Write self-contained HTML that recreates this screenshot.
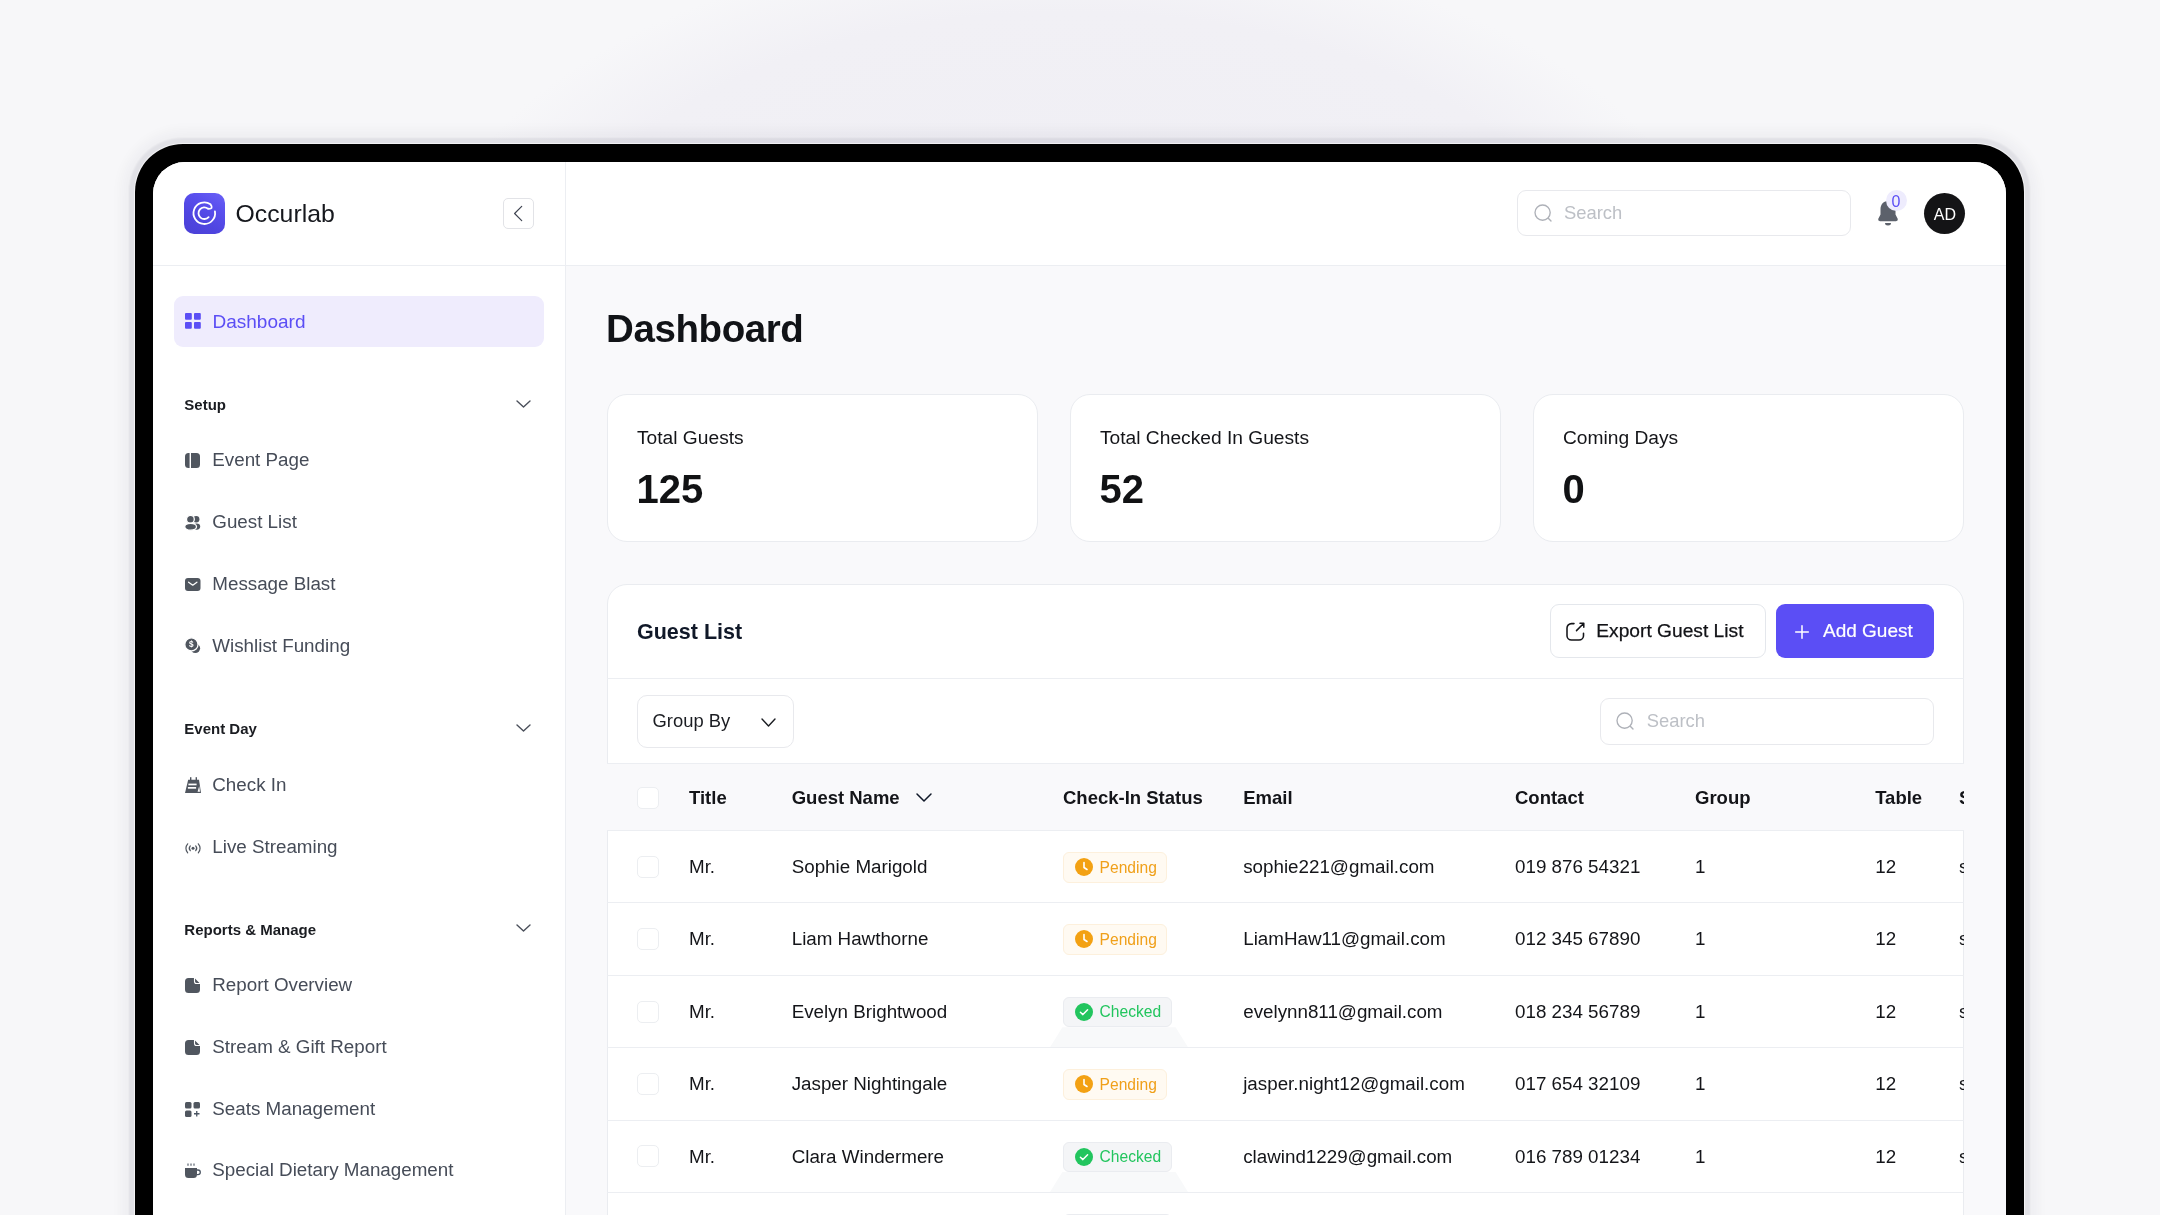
<!DOCTYPE html>
<html><head><meta charset="utf-8">
<style>
*{box-sizing:border-box;margin:0;padding:0}
html,body{width:2160px;height:1215px;overflow:hidden}
body{font-family:"Liberation Sans",sans-serif;position:relative;color:#101828;
 background:radial-gradient(ellipse 650px 360px at 1070px 300px,#efeef4 0%,#f1f0f5 80%,#f7f7f9 100%);}
.a{position:absolute;white-space:nowrap;line-height:1}
svg{position:absolute;overflow:visible}
.box{position:absolute}
#device{position:absolute;left:135px;top:144px;width:1889px;height:1300px;background:#000;border-radius:48px;
 box-shadow:0 0 0 1px rgba(255,255,255,.6),0 0 2px 6px rgba(20,20,50,.06),0 0 12px 14px rgba(20,20,50,.035)}
#screen{position:absolute;left:153px;top:162px;width:1853px;height:1300px;background:#fff;border-radius:32px;overflow:hidden}
#in{position:absolute;left:-153px;top:-162px;width:2160px;height:1500px;will-change:transform}
.nav{color:#464c58}
.sec{font-weight:700;color:#1a1c21}
.lbl{color:#141519}
.num{font-weight:700;color:#111214}
.th{font-weight:700;color:#141519}
.td{color:#141519}
</style></head><body>
<div id="device"></div>
<div id="screen"><div id="in">
<div class="box" style="left:153px;top:162px;width:413px;height:1400px;background:#fff;border-right:1px solid #eceef2"></div>
<div class="box" style="left:153px;top:265px;width:412px;height:1px;background:#eceef2"></div>
<div class="box" style="left:184px;top:193px;width:41px;height:41px;border-radius:10px;background:linear-gradient(210deg,#6b62f6 0%,#5a50ee 30%,#4f45e0 65%,#4a40d6 100%)"></div>
<svg style="left:184px;top:193px" width="41" height="41" viewBox="0 0 41 41">
 <path d="M30.94 18.32 A10.8 10.8 0 1 1 26.49 11.35 Q30.10 16.20 24.03 15.76 A5.8 5.8 0 1 0 24.61 24.08" fill="none" stroke="#fff" stroke-width="1.8" stroke-linecap="round" stroke-linejoin="round"/>
</svg>
<div class="a " style="left:235.50px;top:202.00px;font-size:24.8px;color:#16181d">Occurlab</div>
<div class="box" style="left:503px;top:198px;width:31px;height:31px;border:1px solid #e2e3e7;border-radius:5px;background:#fff"></div>
<svg style="left:503px;top:198px" width="31" height="31" viewBox="0 0 31 31"><path d="M18.7 8.4 L11.6 15.5 L18.7 22.6" fill="none" stroke="#3f4451" stroke-width="1.2" stroke-linecap="round" stroke-linejoin="round"/></svg>
<div class="box" style="left:174px;top:296px;width:370px;height:51px;background:#efecfd;border-radius:9px"></div>
<svg style="left:185px;top:313px" width="16" height="16" viewBox="0 0 16 16" fill="#5b4ef5"><rect x="0" y="0" width="6.8" height="6.8" rx="1"/><rect x="9" y="0" width="6.8" height="6.8" rx="1"/><rect x="0" y="9" width="6.8" height="6.8" rx="1"/><rect x="9" y="9" width="6.8" height="6.8" rx="1"/></svg>
<div class="a " style="left:212.50px;top:312.41px;font-size:19px;color:#5b4ef5">Dashboard</div>
<div class="a sec" style="left:184.30px;top:397.10px;font-size:15px;">Setup</div>
<svg style="left:515.5px;top:399.8px" width="15" height="8" viewBox="0 0 15 8"><path d="M1 1 L7.5 7 L14 1" fill="none" stroke="#4b505b" stroke-width="1.4" stroke-linecap="round" stroke-linejoin="round"/></svg>
<svg style="left:185.2px;top:453.2px" width="15" height="15" viewBox="0 0 15 15" fill="#50565f"><rect x="0" y="0" width="15" height="15" rx="3.5"/><rect x="4.6" y="-1" width="1.4" height="17" fill="#fff"/></svg>
<div class="a nav" style="left:212.30px;top:451.28px;font-size:18.8px;">Event Page</div>
<svg style="left:185.2px;top:514.95px" width="15" height="15" viewBox="0 0 15 15" fill="#50565f"><circle cx="11.2" cy="4.3" r="3.2"/><ellipse cx="11.6" cy="11.6" rx="3.6" ry="3.1"/><circle cx="5.4" cy="4.2" r="3.9" stroke="#fff" stroke-width="1.3"/><ellipse cx="5.6" cy="11.8" rx="5.9" ry="3.4" stroke="#fff" stroke-width="1.3"/></svg>
<div class="a nav" style="left:212.30px;top:513.03px;font-size:18.8px;">Guest List</div>
<svg style="left:185.2px;top:576.7px" width="15" height="15" viewBox="0 0 15 15" fill="#50565f"><rect x="0" y="1" width="15.5" height="13" rx="3"/><path d="M3.6 5.2 L7.75 8.2 L11.9 5.2" fill="none" stroke="#fff" stroke-width="1.3" stroke-linecap="round" stroke-linejoin="round"/></svg>
<div class="a nav" style="left:212.30px;top:574.78px;font-size:18.8px;">Message Blast</div>
<svg style="left:185.2px;top:638.45px" width="15" height="15" viewBox="0 0 15 15" fill="#50565f"><circle cx="10.3" cy="10.3" r="4.8"/><circle cx="6.4" cy="6.4" r="6.6" stroke="#fff" stroke-width="1.3"/><text x="6.4" y="9.3" font-size="8.2" font-weight="700" fill="#fff" text-anchor="middle" font-family="Liberation Sans">$</text></svg>
<div class="a nav" style="left:212.30px;top:636.53px;font-size:18.8px;">Wishlist Funding</div>
<div class="a sec" style="left:184.30px;top:721.10px;font-size:15px;">Event Day</div>
<svg style="left:515.5px;top:723.8px" width="15" height="8" viewBox="0 0 15 8"><path d="M1 1 L7.5 7 L14 1" fill="none" stroke="#4b505b" stroke-width="1.4" stroke-linecap="round" stroke-linejoin="round"/></svg>
<svg style="left:185.2px;top:778.1px" width="15" height="15" viewBox="0 0 15 15" fill="#50565f"><path d="M3.2 1.8 H14 L16 15 H0 Z"/><rect x="5" y="-0.8" width="1.4" height="3.6"/><rect x="10.6" y="-0.8" width="1.4" height="3.6" /><rect x="3.4" y="5.6" width="8.2" height="1.7" fill="#fff"/><rect x="2.9" y="9" width="8.2" height="1.7" fill="#fff"/><path d="M14.2 8 L15 13.8 H12.6Z" fill="#fff"/></svg>
<div class="a nav" style="left:212.30px;top:776.18px;font-size:18.8px;">Check In</div>
<svg style="left:185.2px;top:839.6px" width="15" height="15" viewBox="0 0 15 15" fill="#50565f"><circle cx="8" cy="8.3" r="1.5"/><path d="M5.3 5.9 A3.6 3.6 0 0 0 5.3 10.7 M10.7 5.9 A3.6 3.6 0 0 1 10.7 10.7 M2.7 3.8 A6.6 6.6 0 0 0 2.7 12.8 M13.3 3.8 A6.6 6.6 0 0 1 13.3 12.8" fill="none" stroke="#50565f" stroke-width="1.2" stroke-linecap="round"/></svg>
<div class="a nav" style="left:212.30px;top:837.68px;font-size:18.8px;">Live Streaming</div>
<div class="a sec" style="left:184.30px;top:921.60px;font-size:15px;">Reports &amp; Manage</div>
<svg style="left:515.5px;top:924.3px" width="15" height="8" viewBox="0 0 15 8"><path d="M1 1 L7.5 7 L14 1" fill="none" stroke="#4b505b" stroke-width="1.4" stroke-linecap="round" stroke-linejoin="round"/></svg>
<svg style="left:185.2px;top:978.0px" width="15" height="15" viewBox="0 0 15 15" fill="#50565f"><path d="M3.5 0 H9.5 L15 5.5 V11.5 A3.5 3.5 0 0 1 11.5 15 H3.5 A3.5 3.5 0 0 1 0 11.5 V3.5 A3.5 3.5 0 0 1 3.5 0Z"/><path d="M9.5 0 V3.5 A2 2 0 0 0 11.5 5.5 H15" fill="none" stroke="#fff" stroke-width="1.1"/></svg>
<div class="a nav" style="left:212.30px;top:976.08px;font-size:18.8px;">Report Overview</div>
<svg style="left:185.2px;top:1039.8px" width="15" height="15" viewBox="0 0 15 15" fill="#50565f"><path d="M3.5 0 H9.5 L15 5.5 V11.5 A3.5 3.5 0 0 1 11.5 15 H3.5 A3.5 3.5 0 0 1 0 11.5 V3.5 A3.5 3.5 0 0 1 3.5 0Z"/><path d="M9.5 0 V3.5 A2 2 0 0 0 11.5 5.5 H15" fill="none" stroke="#fff" stroke-width="1.1"/></svg>
<div class="a nav" style="left:212.30px;top:1037.88px;font-size:18.8px;">Stream &amp; Gift Report</div>
<svg style="left:185.2px;top:1101.55px" width="15" height="15" viewBox="0 0 15 15" fill="#50565f"><rect x="0" y="0" width="6.5" height="6.5" rx="1.5"/><rect x="8.5" y="0" width="6.5" height="6.5" rx="1.5"/><rect x="0" y="8.5" width="6.5" height="6.5" rx="1.5"/><path d="M11.75 9 V14.5 M9 11.75 H14.5" stroke="#4b5563" stroke-width="1.3"/></svg>
<div class="a nav" style="left:212.30px;top:1099.63px;font-size:18.8px;">Seats Management</div>
<svg style="left:185.2px;top:1163.3px" width="15" height="15" viewBox="0 0 15 15" fill="#50565f"><path d="M0 5 H12 V11.5 A3.5 3.5 0 0 1 8.5 15 H3.5 A3.5 3.5 0 0 1 0 11.5Z"/><path d="M12 7 H13 A2.3 2.3 0 0 1 13 11.6 H12" fill="none" stroke="#4b5563" stroke-width="1.3"/><path d="M3 0.5 V2.8 M6 0.5 V2.8 M9 0.5 V2.8" stroke="#4b5563" stroke-width="1.1"/></svg>
<div class="a nav" style="left:212.30px;top:1161.38px;font-size:18.8px;">Special Dietary Management</div>
<div class="box" style="left:566px;top:162px;width:1440px;height:1400px;background:#f9f9fb"></div>
<div class="box" style="left:566px;top:162px;width:1440px;height:104px;background:#fff;border-bottom:1px solid #eceef2"></div>
<div class="box" style="left:1517px;top:190px;width:334px;height:46px;background:#fff;border:1px solid #e8e9ed;border-radius:9px"></div>
<svg style="left:1533.5px;top:204.2px" width="20" height="20" viewBox="0 0 20 20"><circle cx="8.6" cy="8.6" r="7.6" fill="none" stroke="#aeb1b8" stroke-width="1.35"/><path d="M14.5 14.5 L17 17" stroke="#aeb1b8" stroke-width="1.35" stroke-linecap="round"/></svg>
<div class="a " style="left:1564.00px;top:204.42px;font-size:18.4px;color:#bdc0c6">Search</div>
<svg style="left:1876px;top:199px" width="24" height="29" viewBox="0 0 24 29"><path d="M12 2 C7 2 4.5 6 4.5 10.5 V15.5 L2.2 20 Q1.8 22 4 22.3 H20 Q22.2 22 21.8 20 L19.5 15.5 V10.5 C19.5 6 17 2 12 2Z" fill="#5c616b"/><path d="M9 24 A3 2.5 0 0 0 15 24Z" fill="#5c616b"/></svg>
<div class="box" style="left:1885.5px;top:189.5px;width:21px;height:21px;background:#eeecfd;border-radius:50%"></div>
<div class="a " style="left:1891.60px;top:193.55px;font-size:16px;color:#5b4ef5">0</div>
<div class="box" style="left:1924px;top:192.5px;width:41px;height:41px;background:#141416;border-radius:50%"></div>
<div class="a " style="left:1933.80px;top:207.35px;font-size:16px;color:#fff">AD</div>
<div class="a " style="left:606.00px;top:310.40px;font-size:38.5px;font-weight:700;letter-spacing:-0.4px;color:#111317">Dashboard</div>
<div class="box" style="left:607px;top:393.5px;width:431px;height:148px;background:#fff;border:1px solid #eaecf0;border-radius:20px"></div>
<div class="a lbl" style="left:637.00px;top:427.99px;font-size:19.2px;">Total Guests</div>
<div class="a num" style="left:636.50px;top:468.63px;font-size:40px;">125</div>
<div class="box" style="left:1070px;top:393.5px;width:431px;height:148px;background:#fff;border:1px solid #eaecf0;border-radius:20px"></div>
<div class="a lbl" style="left:1100.00px;top:427.99px;font-size:19.2px;">Total Checked In Guests</div>
<div class="a num" style="left:1099.50px;top:468.63px;font-size:40px;">52</div>
<div class="box" style="left:1533px;top:393.5px;width:431px;height:148px;background:#fff;border:1px solid #eaecf0;border-radius:20px"></div>
<div class="a lbl" style="left:1563.00px;top:427.99px;font-size:19.2px;">Coming Days</div>
<div class="a num" style="left:1562.50px;top:468.63px;font-size:40px;">0</div>
<div class="box" style="left:607px;top:584px;width:1357px;height:800px;background:#fff;border:1px solid #eaecf0;border-radius:20px"></div>
<div class="a " style="left:637.00px;top:621.60px;font-size:21.5px;font-weight:700;color:#101828">Guest List</div>
<div class="box" style="left:1550px;top:604px;width:216px;height:54px;background:#fff;border:1px solid #e4e7ec;border-radius:9px"></div>
<svg style="left:1565px;top:621px" width="21" height="21" viewBox="0 0 21 21"><path d="M9 2.6 H6.5 A4.5 4.5 0 0 0 2 7.1 V14.5 A4.5 4.5 0 0 0 6.5 19 H14 A4.5 4.5 0 0 0 18.5 14.5 V12.3" fill="none" stroke="#141519" stroke-width="1.55" stroke-linecap="round"/><path d="M11.5 9.6 L18.8 2.3 M15 2.3 H18.8 V6.2" fill="none" stroke="#141519" stroke-width="1.5" stroke-linecap="round" stroke-linejoin="round"/></svg>
<div class="a " style="left:1596.30px;top:621.04px;font-size:19.2px;color:#111216;-webkit-text-stroke:0.25px #111216">Export Guest List</div>
<div class="box" style="left:1776px;top:604px;width:158px;height:54px;background:#5b4ef5;border-radius:9px"></div>
<svg style="left:1795px;top:624.5px" width="14" height="14" viewBox="0 0 14 14"><path d="M7 0.7 V13.3 M0.7 7 H13.3" stroke="#fff" stroke-width="1.5" stroke-linecap="round"/></svg>
<div class="a " style="left:1823.00px;top:621.21px;font-size:19px;color:#fff;-webkit-text-stroke:0.2px #fff">Add Guest</div>
<div class="box" style="left:607px;top:678px;width:1357px;height:1px;background:#eceef2"></div>
<div class="box" style="left:637px;top:694.8px;width:157px;height:53px;background:#fff;border:1px solid #e8e9ed;border-radius:10px"></div>
<div class="a " style="left:652.50px;top:712.42px;font-size:18.4px;color:#1b1d22">Group By</div>
<svg style="left:760.5px;top:717.8px" width="15" height="9" viewBox="0 0 15 9"><path d="M1 1 L7.5 8 L14 1" fill="none" stroke="#1b1d22" stroke-width="1.4" stroke-linecap="round" stroke-linejoin="round"/></svg>
<div class="box" style="left:1600px;top:698px;width:334px;height:47px;background:#fff;border:1px solid #e8e9ed;border-radius:9px"></div>
<svg style="left:1615.5px;top:712px" width="20" height="20" viewBox="0 0 20 20"><circle cx="8.6" cy="8.6" r="7.6" fill="none" stroke="#aeb1b8" stroke-width="1.35"/><path d="M14.5 14.5 L17 17" stroke="#aeb1b8" stroke-width="1.35" stroke-linecap="round"/></svg>
<div class="a " style="left:1646.70px;top:712.42px;font-size:18.4px;color:#bdc0c6">Search</div>
<div class="box" style="left:607px;top:763px;width:1357px;height:67.5px;background:#f9f9fb;border-top:1px solid #eceef2;border-bottom:1px solid #eceef2"></div>
<div class="box" style="left:607px;top:763px;width:1357px;height:600px;overflow:hidden">
<div class="box" style="left:29.5px;top:23.5px;width:22px;height:22px;background:#fff;border:1px solid #eceef1;border-radius:5px"></div>
<div class="a th" style="left:82.00px;top:25.59px;font-size:18.5px;">Title</div>
<div class="a th" style="left:184.70px;top:25.59px;font-size:18.5px;">Guest Name</div>
<div class="a th" style="left:456.00px;top:25.59px;font-size:18.5px;">Check-In Status</div>
<div class="a th" style="left:636.20px;top:25.59px;font-size:18.5px;">Email</div>
<div class="a th" style="left:908.00px;top:25.59px;font-size:18.5px;">Contact</div>
<div class="a th" style="left:1088.00px;top:25.59px;font-size:18.5px;">Group</div>
<div class="a th" style="left:1268.20px;top:25.59px;font-size:18.5px;">Table</div>
<div class="a th" style="left:1352.00px;top:25.59px;font-size:18.5px;">Seat</div>
<svg style="left:309.0px;top:30.0px" width="16" height="9" viewBox="0 0 16 9"><path d="M1 1 L8 8 L15 1" fill="none" stroke="#101828" stroke-width="1.5" stroke-linecap="round" stroke-linejoin="round"/></svg>
<div class="box" style="left:0px;top:139.39999999999998px;width:1357px;height:1px;background:#eceef2"></div>
<div class="box" style="left:29.5px;top:92.70000000000005px;width:22px;height:22px;background:#fff;border:1px solid #eceef1;border-radius:5px"></div>
<div class="a td" style="left:82.00px;top:95.08px;font-size:18.8px;">Mr.</div>
<div class="a td" style="left:184.70px;top:95.08px;font-size:18.8px;">Sophie Marigold</div>
<div class="box" style="left:456px;top:89.0px;width:104px;height:30.5px;background:#fffaf2;border:1px solid #fdf0dc;border-radius:6px"></div>
<svg style="left:467.5px;top:95.0px" width="18" height="18" viewBox="0 0 18 18"><circle cx="9" cy="9" r="9" fill="#f3a113"/><path d="M9 4.5 V9.5 L12 11.5" fill="none" stroke="#fff" stroke-width="1.6" stroke-linecap="round" stroke-linejoin="round"/></svg>
<div class="a " style="left:492.60px;top:96.59px;font-size:15.6px;color:#f0a01a">Pending</div>
<div class="a td" style="left:636.20px;top:95.08px;font-size:18.8px;">sophie221@gmail.com</div>
<div class="a td" style="left:908.00px;top:95.08px;font-size:18.8px;">019 876 54321</div>
<div class="a td" style="left:1088.00px;top:95.08px;font-size:18.8px;">1</div>
<div class="a td" style="left:1268.20px;top:95.08px;font-size:18.8px;">12</div>
<div class="a td" style="left:1352.00px;top:95.08px;font-size:18.8px;">s</div>
<div class="box" style="left:0px;top:211.79999999999995px;width:1357px;height:1px;background:#eceef2"></div>
<div class="box" style="left:29.5px;top:165.10000000000002px;width:22px;height:22px;background:#fff;border:1px solid #eceef1;border-radius:5px"></div>
<div class="a td" style="left:82.00px;top:167.48px;font-size:18.8px;">Mr.</div>
<div class="a td" style="left:184.70px;top:167.48px;font-size:18.8px;">Liam Hawthorne</div>
<div class="box" style="left:456px;top:161.39999999999998px;width:104px;height:30.5px;background:#fffaf2;border:1px solid #fdf0dc;border-radius:6px"></div>
<svg style="left:467.5px;top:167.4px" width="18" height="18" viewBox="0 0 18 18"><circle cx="9" cy="9" r="9" fill="#f3a113"/><path d="M9 4.5 V9.5 L12 11.5" fill="none" stroke="#fff" stroke-width="1.6" stroke-linecap="round" stroke-linejoin="round"/></svg>
<div class="a " style="left:492.60px;top:168.99px;font-size:15.6px;color:#f0a01a">Pending</div>
<div class="a td" style="left:636.20px;top:167.48px;font-size:18.8px;">LiamHaw11@gmail.com</div>
<div class="a td" style="left:908.00px;top:167.48px;font-size:18.8px;">012 345 67890</div>
<div class="a td" style="left:1088.00px;top:167.48px;font-size:18.8px;">1</div>
<div class="a td" style="left:1268.20px;top:167.48px;font-size:18.8px;">12</div>
<div class="a td" style="left:1352.00px;top:167.48px;font-size:18.8px;">s</div>
<div class="box" style="left:0px;top:284.20000000000005px;width:1357px;height:1px;background:#eceef2"></div>
<div class="box" style="left:29.5px;top:237.5px;width:22px;height:22px;background:#fff;border:1px solid #eceef1;border-radius:5px"></div>
<div class="a td" style="left:82.00px;top:239.88px;font-size:18.8px;">Mr.</div>
<div class="a td" style="left:184.70px;top:239.88px;font-size:18.8px;">Evelyn Brightwood</div>
<div class="box" style="left:443px;top:264.29999999999995px;width:138px;height:19.90000000000009px;background:#f8f9fa;clip-path:polygon(9% 0,91% 0,100% 100%,0 100%)"></div>
<div class="box" style="left:456px;top:233.79999999999995px;width:109px;height:30.5px;background:#f4f5f7;border:1px solid #eaecf0;border-radius:6px"></div>
<svg style="left:467.5px;top:239.8px" width="18" height="18" viewBox="0 0 18 18"><circle cx="9" cy="9" r="9" fill="#22c55e"/><path d="M5.4 9.3 L7.9 11.6 L12.6 6.8" fill="none" stroke="#fff" stroke-width="1.5" stroke-linecap="round" stroke-linejoin="round"/></svg>
<div class="a " style="left:492.60px;top:241.39px;font-size:15.6px;color:#22c55e">Checked</div>
<div class="a td" style="left:636.20px;top:239.88px;font-size:18.8px;">evelynn811@gmail.com</div>
<div class="a td" style="left:908.00px;top:239.88px;font-size:18.8px;">018 234 56789</div>
<div class="a td" style="left:1088.00px;top:239.88px;font-size:18.8px;">1</div>
<div class="a td" style="left:1268.20px;top:239.88px;font-size:18.8px;">12</div>
<div class="a td" style="left:1352.00px;top:239.88px;font-size:18.8px;">s</div>
<div class="box" style="left:0px;top:356.60000000000014px;width:1357px;height:1px;background:#eceef2"></div>
<div class="box" style="left:29.5px;top:309.9000000000001px;width:22px;height:22px;background:#fff;border:1px solid #eceef1;border-radius:5px"></div>
<div class="a td" style="left:82.00px;top:312.28px;font-size:18.8px;">Mr.</div>
<div class="a td" style="left:184.70px;top:312.28px;font-size:18.8px;">Jasper Nightingale</div>
<div class="box" style="left:456px;top:306.20000000000005px;width:104px;height:30.5px;background:#fffaf2;border:1px solid #fdf0dc;border-radius:6px"></div>
<svg style="left:467.5px;top:312.2px" width="18" height="18" viewBox="0 0 18 18"><circle cx="9" cy="9" r="9" fill="#f3a113"/><path d="M9 4.5 V9.5 L12 11.5" fill="none" stroke="#fff" stroke-width="1.6" stroke-linecap="round" stroke-linejoin="round"/></svg>
<div class="a " style="left:492.60px;top:313.79px;font-size:15.6px;color:#f0a01a">Pending</div>
<div class="a td" style="left:636.20px;top:312.28px;font-size:18.8px;">jasper.night12@gmail.com</div>
<div class="a td" style="left:908.00px;top:312.28px;font-size:18.8px;">017 654 32109</div>
<div class="a td" style="left:1088.00px;top:312.28px;font-size:18.8px;">1</div>
<div class="a td" style="left:1268.20px;top:312.28px;font-size:18.8px;">12</div>
<div class="a td" style="left:1352.00px;top:312.28px;font-size:18.8px;">s</div>
<div class="box" style="left:0px;top:429.0px;width:1357px;height:1px;background:#eceef2"></div>
<div class="box" style="left:29.5px;top:382.29999999999995px;width:22px;height:22px;background:#fff;border:1px solid #eceef1;border-radius:5px"></div>
<div class="a td" style="left:82.00px;top:384.68px;font-size:18.8px;">Mr.</div>
<div class="a td" style="left:184.70px;top:384.68px;font-size:18.8px;">Clara Windermere</div>
<div class="box" style="left:443px;top:409.0999999999999px;width:138px;height:19.90000000000009px;background:#f8f9fa;clip-path:polygon(9% 0,91% 0,100% 100%,0 100%)"></div>
<div class="box" style="left:456px;top:378.5999999999999px;width:109px;height:30.5px;background:#f4f5f7;border:1px solid #eaecf0;border-radius:6px"></div>
<svg style="left:467.5px;top:384.6px" width="18" height="18" viewBox="0 0 18 18"><circle cx="9" cy="9" r="9" fill="#22c55e"/><path d="M5.4 9.3 L7.9 11.6 L12.6 6.8" fill="none" stroke="#fff" stroke-width="1.5" stroke-linecap="round" stroke-linejoin="round"/></svg>
<div class="a " style="left:492.60px;top:386.19px;font-size:15.6px;color:#22c55e">Checked</div>
<div class="a td" style="left:636.20px;top:384.68px;font-size:18.8px;">clawind1229@gmail.com</div>
<div class="a td" style="left:908.00px;top:384.68px;font-size:18.8px;">016 789 01234</div>
<div class="a td" style="left:1088.00px;top:384.68px;font-size:18.8px;">1</div>
<div class="a td" style="left:1268.20px;top:384.68px;font-size:18.8px;">12</div>
<div class="a td" style="left:1352.00px;top:384.68px;font-size:18.8px;">s</div>
<div class="box" style="left:0px;top:501.4000000000001px;width:1357px;height:1px;background:#eceef2"></div>
<div class="box" style="left:29.5px;top:454.70000000000005px;width:22px;height:22px;background:#fff;border:1px solid #eceef1;border-radius:5px"></div>
<div class="a td" style="left:82.00px;top:457.08px;font-size:18.8px;">Mr.</div>
<div class="a td" style="left:184.70px;top:457.08px;font-size:18.8px;">Oliver Ashford</div>
<div class="box" style="left:443px;top:481.5px;width:138px;height:19.90000000000009px;background:#f8f9fa;clip-path:polygon(9% 0,91% 0,100% 100%,0 100%)"></div>
<div class="box" style="left:456px;top:451.0px;width:109px;height:30.5px;background:#f4f5f7;border:1px solid #eaecf0;border-radius:6px"></div>
<svg style="left:467.5px;top:457.0px" width="18" height="18" viewBox="0 0 18 18"><circle cx="9" cy="9" r="9" fill="#22c55e"/><path d="M5.4 9.3 L7.9 11.6 L12.6 6.8" fill="none" stroke="#fff" stroke-width="1.5" stroke-linecap="round" stroke-linejoin="round"/></svg>
<div class="a " style="left:492.60px;top:458.59px;font-size:15.6px;color:#22c55e">Checked</div>
<div class="a td" style="left:636.20px;top:457.08px;font-size:18.8px;">oliverash@gmail.com</div>
<div class="a td" style="left:908.00px;top:457.08px;font-size:18.8px;">015 432 10987</div>
<div class="a td" style="left:1088.00px;top:457.08px;font-size:18.8px;">1</div>
<div class="a td" style="left:1268.20px;top:457.08px;font-size:18.8px;">12</div>
<div class="a td" style="left:1352.00px;top:457.08px;font-size:18.8px;">s</div>
</div>
</div></div>
</body></html>
